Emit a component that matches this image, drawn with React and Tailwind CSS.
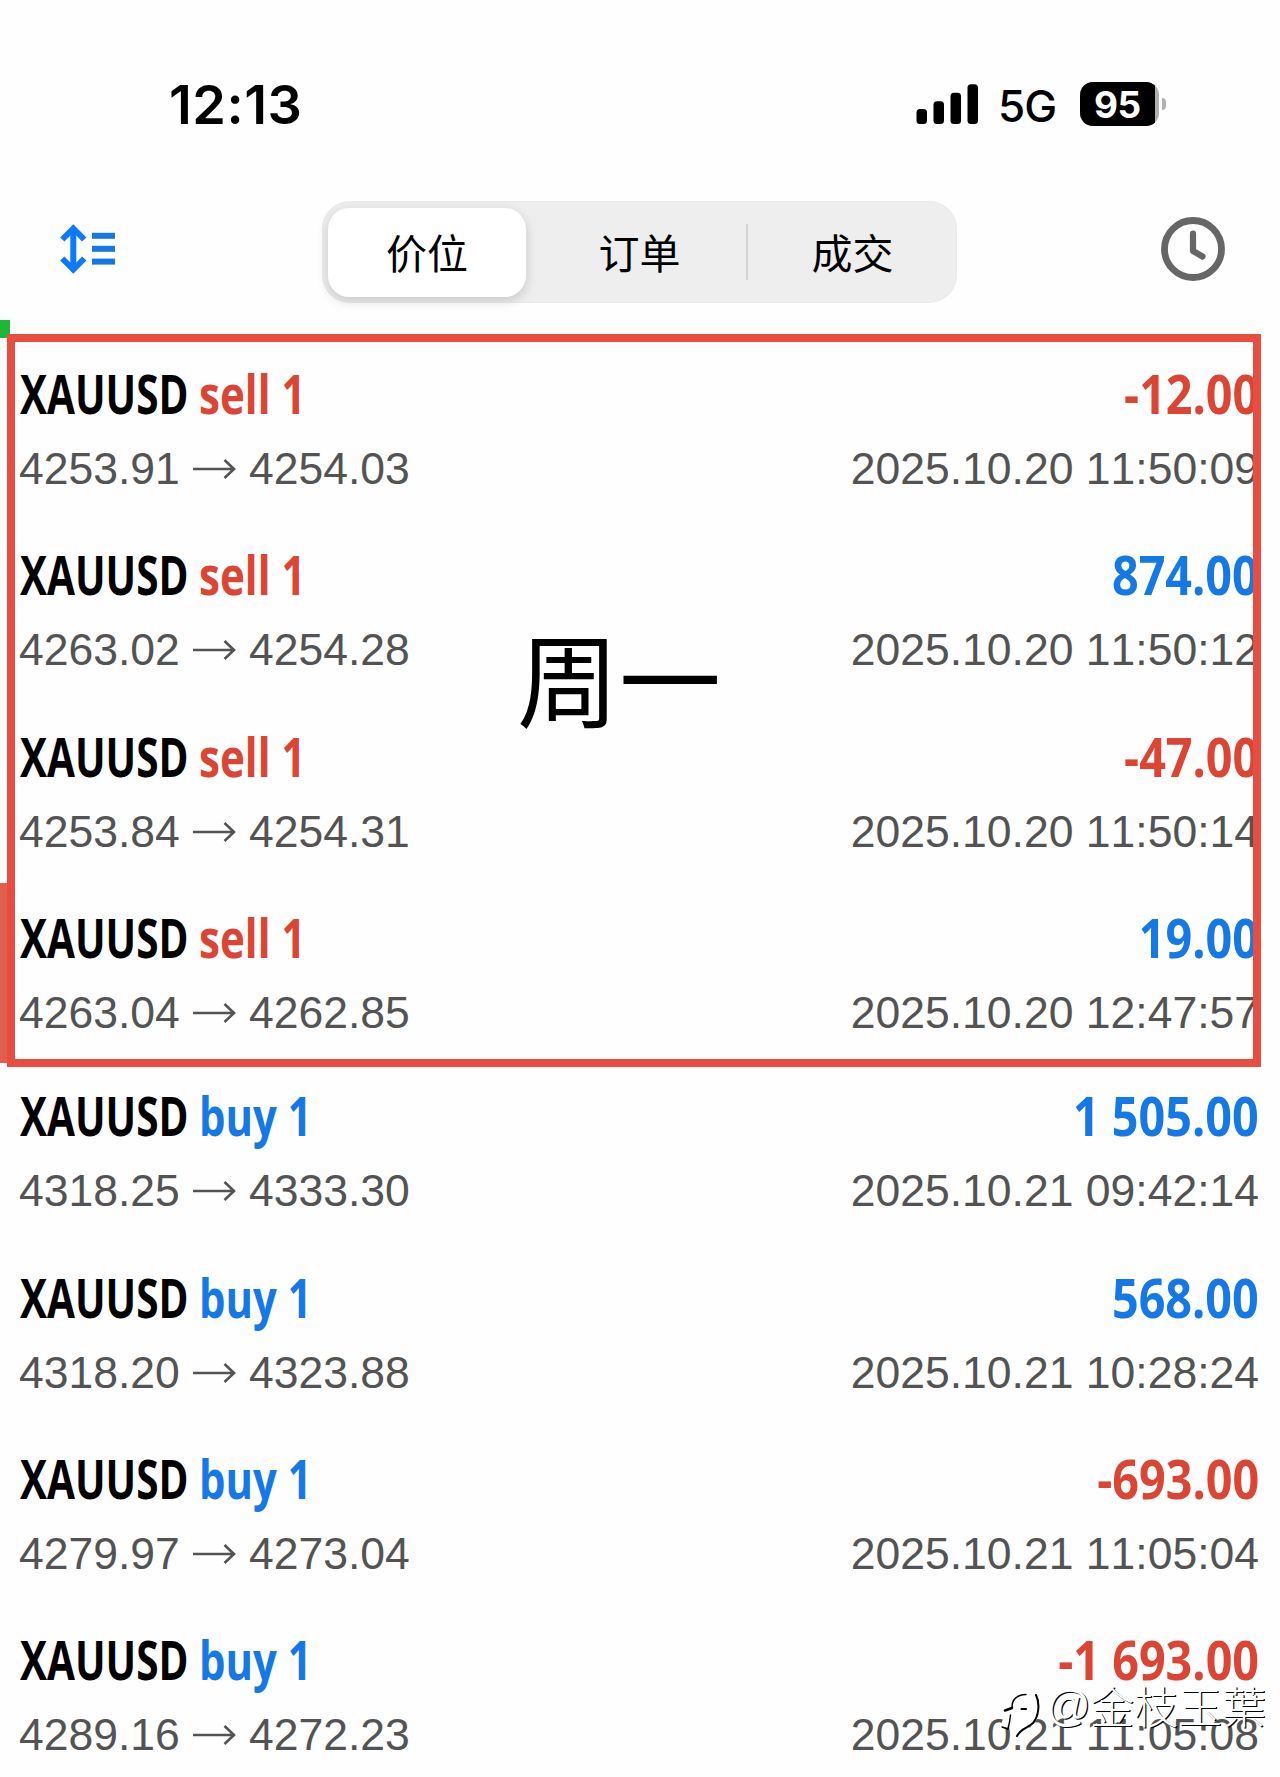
const rows = [
  { side: "sell", from: "4253.91", to: "4254.03", amount: "-12.00", time: "2025.10.20 11:50:09" },
  { side: "sell", from: "4263.02", to: "4254.28", amount: "874.00", time: "2025.10.20 11:50:12" },
  { side: "sell", from: "4253.84", to: "4254.31", amount: "-47.00", time: "2025.10.20 11:50:14" },
  { side: "sell", from: "4263.04", to: "4262.85", amount: "19.00", time: "2025.10.20 12:47:57" },
  { side: "buy", from: "4318.25", to: "4333.30", amount: "1 505.00", time: "2025.10.21 09:42:14" },
  { side: "buy", from: "4318.20", to: "4323.88", amount: "568.00", time: "2025.10.21 10:28:24" },
  { side: "buy", from: "4279.97", to: "4273.04", amount: "-693.00", time: "2025.10.21 11:05:04" },
  { side: "buy", from: "4289.16", to: "4272.23", amount: "-1 693.00", time: "2025.10.21 11:05:08" },
];

function StatusBar() {
  return (
    <div className="flex h-[201px] items-start pt-[72px] text-black">
      <div className="mt-px ml-[169px] w-[747px] font-['Inter',sans-serif] text-[54px] leading-[64px] font-semibold tracking-[0.5px]">12:13</div>
      <svg className="mt-[12px] shrink-0" width="62" height="40" viewBox="0 0 62 40">
        <rect x="0.5" y="25" width="10.5" height="15" rx="3.5" />
        <rect x="17.5" y="17.3" width="10.5" height="22.7" rx="3.5" />
        <rect x="34.5" y="8.7" width="10.5" height="31.3" rx="3.5" />
        <rect x="51.5" y="0.3" width="10.5" height="39.7" rx="3.5" />
      </svg>
      <div className="ml-[20px] w-[82px] font-['Inter',sans-serif] text-[44px] leading-[68px] font-medium tracking-[-1px]">5G</div>
      <div className="mt-[10px] flex h-[44px] w-[79px] overflow-hidden rounded-[13px] bg-[#b0b0b0]">
        <div className="w-[75px] bg-black pl-[14px] font-['Inter',sans-serif] text-[37px] leading-[45px] font-bold tracking-[-0.5px] text-white">95</div>
      </div>
      <div className="mt-[26px] ml-[3px] h-[12px] w-[4px] rounded-r-full bg-[#b0b0b0]" />
    </div>
  );
}

function Toolbar() {
  return (
    <div className="flex h-[119px] items-start">
      <svg className="mt-[23px] ml-[60px]" width="56" height="50" viewBox="0 0 56 50">
        <g fill="none" stroke="#0c7aff" strokeWidth="6">
          <path d="M13.3 5V45" />
          <path d="M2.3 15.5L13.3 4.5L24.3 15.5" />
          <path d="M2.3 34.5L13.3 45.5L24.3 34.5" />
        </g>
        <path fill="#0c7aff" d="M13.3 1L22 11H4.6ZM13.3 49L22 39H4.6Z" />
        <g fill="#1478e2">
          <rect x="32" y="8.8" width="23" height="6" />
          <rect x="32" y="21.8" width="23" height="6" />
          <rect x="32" y="34.6" width="23" height="6" />
        </g>
      </svg>
      <div className="ml-[206px] flex h-[102px] w-[635px] shrink-0 items-center rounded-[28px] bg-[#eeeeef] pl-[6px] font-['Noto_Sans_CJK_SC',sans-serif] text-[41px] leading-[60px] text-black shadow-[inset_0_0_2px_#e2e2e4]">
        <div className="flex h-[89px] w-[198px] shrink-0 items-center justify-center rounded-[21px] bg-white pb-[2px] shadow-[0_4px_12px_rgba(0,0,0,0.16)]">价位</div>
        <div className="ml-[7px] flex w-[213px] shrink-0 justify-center pb-[2px]">订单</div>
        <div className="h-[56px] w-[2px] shrink-0 bg-[#d4d4d8]" />
        <div className="flex w-[209px] justify-center pb-[2px]">成交</div>
      </div>
      <svg className="mt-[15px] ml-[203px]" width="66" height="66" viewBox="0 0 66 66" fill="none" stroke="#666" strokeLinecap="round" strokeLinejoin="round">
        <circle cx="33" cy="33" r="28.5" strokeWidth="6.8" />
        <path d="M33 17.5V35L42.500 40.5" strokeWidth="6.2" />
      </svg>
    </div>
  );
}

function Row({ side, from, to, amount, time }) {
  const negative = amount.startsWith("-");
  return (
    <div className="h-[181.33px] pr-[21px] pl-[20px]">
      <div className="flex h-[80px] justify-between font-['Open_Sans',sans-serif] text-[54px] leading-[68px] font-bold whitespace-nowrap">
        <div className="flex">
          <div className="w-[179px] origin-left scale-x-[0.75] text-black">XAUUSD</div>
          <div className={side === "sell" ? "origin-left scale-x-[0.78] text-[#dc4434]" : "origin-left scale-x-[0.775] text-[#1478e6]"}>
            {side} 1
          </div>
        </div>
        <div className={negative ? "origin-right scale-x-[0.865] text-[#dc4434]" : "origin-right scale-x-[0.865] text-[#1478e6]"}>{amount}</div>
      </div>
      <div className="flex h-[60px] items-center font-['Liberation_Sans',sans-serif] text-[44.5px] leading-[60px] whitespace-nowrap text-[#535353] [font-kerning:none]">
        <div className="-ml-px w-[174px]">{from}</div>
        <svg width="43" height="20" viewBox="0 0 43 20" fill="none" stroke="#535353" strokeWidth="2.6">
          <path d="M0 10H41M31.5 1L41 10L31.5 19" />
        </svg>
        <div className="ml-[13px] grow">{to}</div>
        <div>{time}</div>
      </div>
    </div>
  );
}

function Watermark() {
  return (
    <div className="absolute top-[1675px] left-[995px] flex items-start text-white">
      <svg width="51" height="70" viewBox="0 0 51 70" fill="none">
        <path d="M8 35H15C16 25 21 20 30 20C39 20 41 27 41 34C41 43 36 48 28 51L19 58" stroke="#fff" strokeWidth="7" />
        <path d="M14 36L9 52" stroke="#fff" strokeWidth="7" />
        <path d="M20 30H38V44H22Z" fill="#fff" />
        <g stroke="#000" strokeLinecap="round">
          <path d="M10 35.5L17 33" strokeWidth="2.4" />
          <path d="M17 32C17 25 21 20 31 19.5" strokeWidth="1.6" />
          <path d="M41 20C45 28 44 41 38 48C33 53 26 53 22 61" strokeWidth="2" />
          <path d="M26.5 34H31" strokeWidth="2.2" />
          <path d="M15.5 40C15 46 14 50 13 54L7 52" strokeWidth="1.4" />
        </g>
      </svg>
      <div className="flex text-[44px] leading-[60px] whitespace-nowrap [text-shadow:1.3px_1.3px_0_#000]">
        <span className="w-[44px] font-['Liberation_Sans',sans-serif] leading-[62px]">@</span>
        <span className="font-['Noto_Sans_CJK_TC',sans-serif] font-light">金枝玉葉</span>
      </div>
    </div>
  );
}

export default function App() {
  return (
    <div className="relative h-[1777px] w-[1280px] overflow-hidden bg-[#fefefe]">
      <StatusBar />
      <Toolbar />
      <div className="relative pt-[39px]">
        {rows.slice(0, 4).map((r) => <Row key={r.time} {...r} />)}
        <div className="absolute top-0 left-0 h-[18px] w-[10px] bg-[#1eb838]" />
        <div className="absolute top-[563px] left-0 h-[180px] w-[8px] bg-[#e05f50]" />
        <div className="absolute top-[14px] left-[7px] h-[733px] w-[1254px] border-8 border-[#e84d40]" />
        <div className="absolute top-[286px] left-[517px] font-['Noto_Sans_CJK_SC',sans-serif] text-[102px] leading-[140px] whitespace-nowrap text-black">周一</div>
      </div>
      <div className="-mt-[3px]">
        {rows.slice(4).map((r) => <Row key={r.time} {...r} />)}
      </div>
      <Watermark />
    </div>
  );
}
